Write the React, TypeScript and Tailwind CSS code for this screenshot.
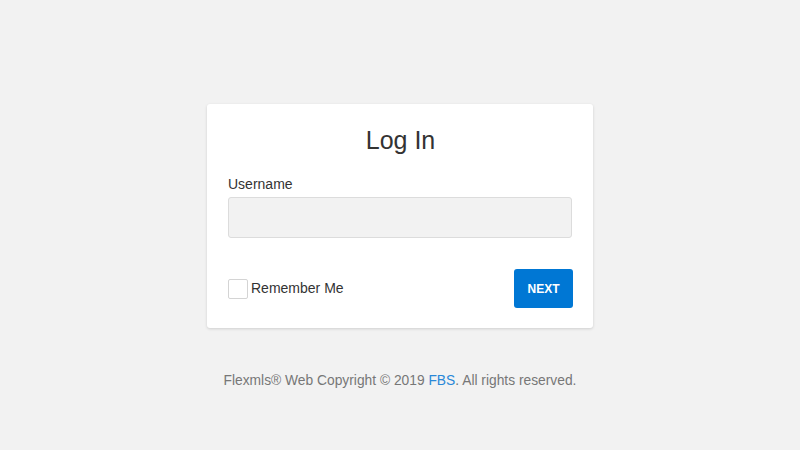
import React from "react";

export default function App() {
  return (
    <div
      className="w-[800px] h-[450px] bg-[#f2f2f2] flex flex-col items-center"
      style={{ fontFamily: '"Liberation Sans", Arial, sans-serif' }}
    >
      <div className="mt-[104px] w-[386px] h-[224px] bg-white rounded-[3px] shadow-[0_1px_3px_rgba(0,0,0,0.15)] pl-[21px] pr-[20px] pt-[21px] flex flex-col">
        <h1 className="text-center text-[25px] leading-[30px] text-[#333]">Log In</h1>
        <label className="mt-[19px] text-[14px] leading-[20px] text-[#333]">Username</label>
        <div className="mt-[3px] h-[41px] w-[344px] bg-[#f2f2f2] border border-[#dcdcdc] rounded-[3px]" />
        <div className="mt-[31px] flex items-center justify-between">
          <div className="flex items-center">
            <div className="w-[20px] h-[20px] bg-white border border-[#d4d4d4] rounded-[2px]" />
            <span className="ml-[3px] text-[14px] text-[#333]">Remember Me</span>
          </div>
          <button className="w-[59px] h-[39px] bg-[#0077d4] rounded-[3px] text-white text-[12px] font-bold">
            NEXT
          </button>
        </div>
      </div>
      <div className="mt-[43px] text-[13.8px] leading-[20px] text-[#777]">
        Flexmls® Web Copyright © 2019 <span className="text-[#2a88d8]">FBS</span>. All rights reserved.
      </div>
    </div>
  );
}
